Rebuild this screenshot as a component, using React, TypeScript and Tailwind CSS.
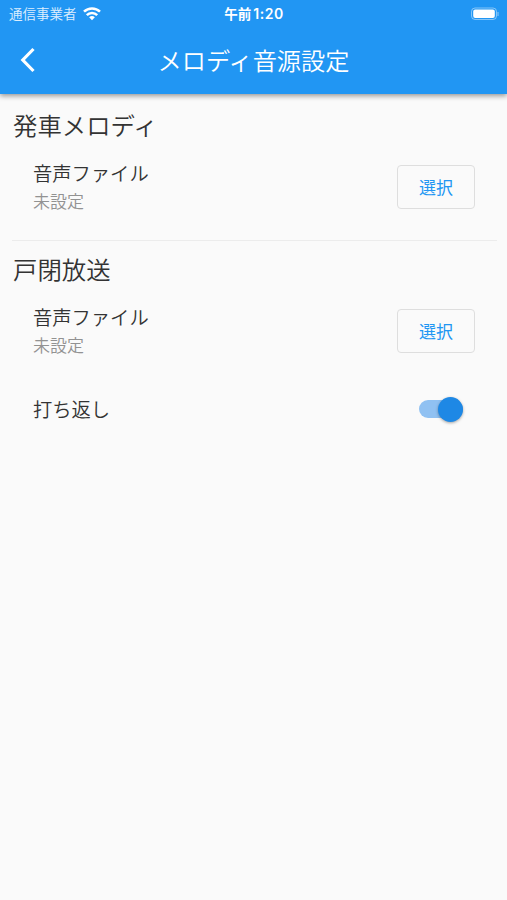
import { useState } from "react";

const SoundRow = () => (
  <div className="flex items-center justify-between pl-[33px] pr-8 h-[60px]">
    <div>
      <p className="text-[19.3px] leading-7 text-[#333]">音声ファイル</p>
      <p className="text-[17px] leading-7 text-[#929292]">未設定</p>
    </div>
    <button className="w-[78px] h-11 rounded border border-[#dedede] text-[17px] font-normal text-[#2196f3]">
      選択
    </button>
  </div>
);

const App = () => {
  const [isOn, setIsOn] = useState(true);

  return (
    <div className="h-[900px] w-[507px] overflow-hidden bg-[#fafafa] font-['Noto_Sans_CJK_JP',sans-serif] font-[350]">
      <header className="relative h-[94px] bg-[#2196f3] text-white shadow-[0_2px_5px_rgba(0,0,0,0.4)]">
        <div className="grid grid-cols-3 items-center h-[27px] pl-[9px] pr-2 text-[13.5px]">
          <div className="flex items-center gap-1.5">
            <span className="text-white/85">通信事業者</span>
            <svg viewBox="0 0 18 14" className="w-[18px] h-3.5" fill="none" stroke="currentColor" strokeWidth="2.5">
              <path d="M1 4.7a11.3 11.3 0 0 1 16 0M3.8 8.2a7.2 7.2 0 0 1 10.4 0" />
              <path d="M6.1 10.3a4.2 4.2 0 0 1 5.8 0L9 13.2z" fill="currentColor" stroke="none" />
            </svg>
          </div>
          <span className="text-center font-bold">
            午前<span className="ml-0.5 font-['Inter',sans-serif] font-semibold text-[14px] tracking-[0.5px]">1:20</span>
          </span>
          <div className="flex justify-end items-center">
            <svg viewBox="0 0 29 14" className="w-[29px] h-3.5">
              <rect x="1.5" y="1" width="25" height="11.5" rx="3.5" fill="none" stroke="white" strokeOpacity=".45" />
              <rect x="3.2" y="2.5" width="21.6" height="8.6" rx="2" fill="white" />
              <path d="M28 5v4" stroke="white" strokeOpacity=".5" />
            </svg>
          </div>
        </div>
        <div className="grid grid-cols-[50px_1fr_50px] items-center h-[65px]">
          <button className="pl-5">
            <svg viewBox="0 0 16 26" className="w-4 h-[26px]" fill="none" stroke="currentColor" strokeWidth="3.2">
              <path d="M13.5 2 2.8 13l10.7 11" />
            </svg>
          </button>
          <h1 className="pt-0.5 text-center text-[24.2px]">メロディ音源設定</h1>
        </div>
      </header>
      <main>
        <section className="pt-[13px]">
          <h2 className="pl-[13px] text-[24.4px] leading-9 text-[#333]">発車メロディ</h2>
          <div className="mt-3.5">
            <SoundRow />
          </div>
        </section>
        <hr className="ml-3 mr-2.5 mt-[23px] border-[#ececec]" />
        <section className="pt-2.5">
          <h2 className="pl-[13px] text-[24.4px] leading-9 text-[#333]">戸閉放送</h2>
          <div className="mt-3.5">
            <SoundRow />
          </div>
          <div className="mt-5 flex items-center justify-between pl-[33px] pr-11 h-14">
            <span className="text-[19.3px] text-[#333]">打ち返し</span>
            <button onClick={() => setIsOn(!isOn)} className="flex items-center w-11 h-[18px] rounded-full bg-[#90c1f2]">
              <span
                className={
                  isOn
                    ? "ml-auto size-[25px] rounded-full bg-[#1e88e5] shadow-[0_1px_3px_rgba(0,0,0,0.35)]"
                    : "size-[25px] rounded-full bg-white shadow-[0_1px_3px_rgba(0,0,0,0.35)]"
                }
              />
            </button>
          </div>
        </section>
      </main>
    </div>
  );
};

export default App;
